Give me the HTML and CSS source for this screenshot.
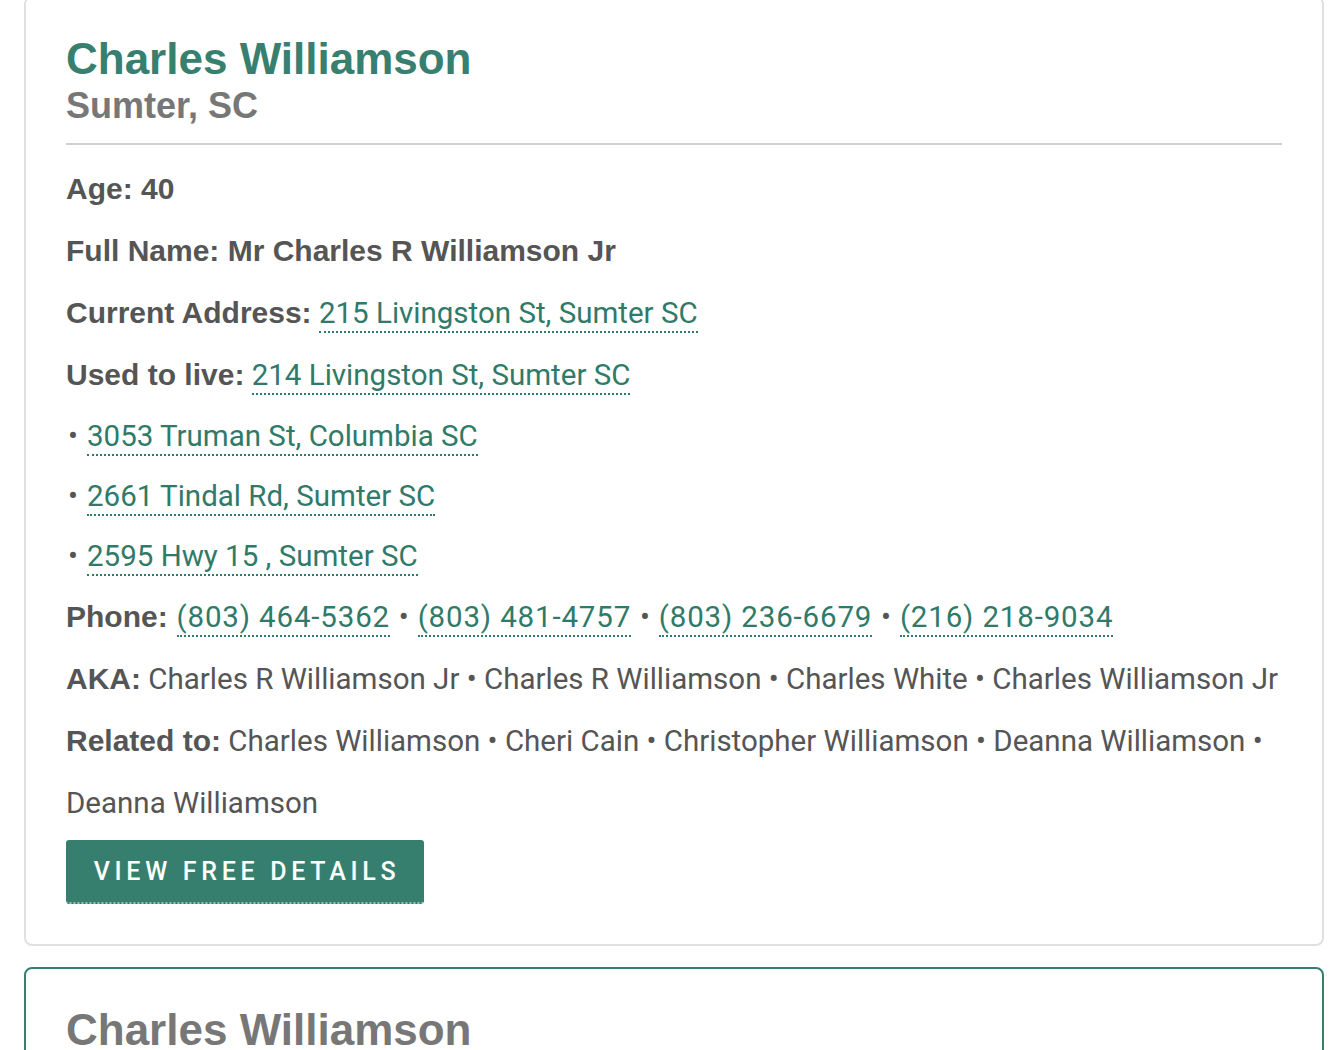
FILE: index.html
```html
<!DOCTYPE html>
<html>
<head>
<meta charset="utf-8">
<link rel="stylesheet" href="styles.css">
</head>
<body>
<div class="list">
  <div class="card card-active">
    <h2 class="name">Charles Williamson</h2>
    <div class="loc">Sumter, SC</div>
    <hr class="rule">
    <div class="row"><b>Age: 40</b></div>
    <div class="row"><b>Full Name: Mr Charles R Williamson Jr</b></div>
    <div class="row"><b>Current Address:</b> <a class="lnk" href="#">215 Livingston St, Sumter SC</a></div>
    <div class="row"><b>Used to live:</b> <a class="lnk" href="#">214 Livingston St, Sumter SC</a></div>
    <div class="row bullet"><span class="dot">•</span><a class="lnk" href="#">3053 Truman St, Columbia SC</a></div>
    <div class="row bullet"><span class="dot">•</span><a class="lnk" href="#">2661 Tindal Rd, Sumter SC</a></div>
    <div class="row bullet"><span class="dot">•</span><a class="lnk" href="#">2595 Hwy 15 , Sumter SC</a></div>
    <div class="row phones"><b>Phone:</b> <a class="lnk tel" href="#">(803) 464-5362</a> • <a class="lnk tel" href="#">(803) 481-4757</a> • <a class="lnk tel" href="#">(803) 236-6679</a> • <a class="lnk tel" href="#">(216) 218-9034</a></div>
    <div class="row"><b>AKA:</b> Charles R Williamson Jr • Charles R Williamson • Charles White • Charles Williamson Jr</div>
    <div class="row"><b>Related to:</b> Charles Williamson • Cheri Cain • Christopher Williamson • Deanna Williamson •<br>Deanna Williamson</div>
    <a class="btn" href="#">VIEW FREE DETAILS</a>
  </div>
  <div class="card card-next">
    <h2 class="name name-gray">Charles Williamson</h2>
    <div class="loc">Sumter, SC</div>
  </div>
</div>
</body>
</html>
```
FILE: styles.css
```css
html, body {
  margin: 0;
  padding: 0;
  background: #fff;
  overflow: hidden;
}
body {
  font-family: "Liberation Sans", Arial, sans-serif;
  color: #555;
}
.list {
  padding: 0 12px 0 24px;
  margin-top: -4px;
  display: flex;
  flex-direction: column;
  gap: 21px;
}
.card {
  width: 1300px;
  box-sizing: border-box;
  border: 2px solid #e0e0e0;
  border-radius: 8px;
  padding: 37px 40px 40px 40px;
  background: #fff;
}
.card-next {
  border-color: #367f6e;
}
.name {
  margin: 0;
  font-size: 44px;
  line-height: 48px;
  font-weight: bold;
  color: #37806f;
}
.name-gray {
  color: #777;
}
.loc {
  font-size: 36px;
  line-height: 46px;
  font-weight: bold;
  color: #777;
}
.rule {
  border: 0;
  border-top: 2px solid #d0d0d0;
  margin: 14px 0 13px 0;
  height: 0;
}
.row {
  font-family: Roboto, "Liberation Sans", sans-serif;
  font-size: 29.5px;
  line-height: 62px;
  color: #555;
}
.row b {
  font-family: "Liberation Sans", Arial, sans-serif;
  font-size: 30px;
  font-weight: bold;
}
.bullet {
  line-height: 60px;
}
.dot {
  display: inline-block;
  padding-left: 2px;
  width: 19px;
}
.lnk {
  color: #2f7a69;
  text-decoration: none;
  border-bottom: 2px dotted #2f7a69;
  padding-bottom: 1px;
}
.phones {
  word-spacing: 1.5px;
}
.tel {
  letter-spacing: 0.85px;
  word-spacing: 0;
}
.btn {
  display: inline-block;
  margin-top: 6px;
  width: 358px;
  height: 64px;
  box-sizing: border-box;
  background: #367f6e;
  color: #fff;
  text-decoration: none;
  font-family: Roboto, "Liberation Sans", sans-serif;
  font-weight: 500;
  font-size: 25px;
  letter-spacing: 4.7px;
  line-height: 64px;
  text-indent: 4px;
  text-align: center;
  border-radius: 3px;
  border-bottom: 2px dotted #9cc4ba;
}
```
